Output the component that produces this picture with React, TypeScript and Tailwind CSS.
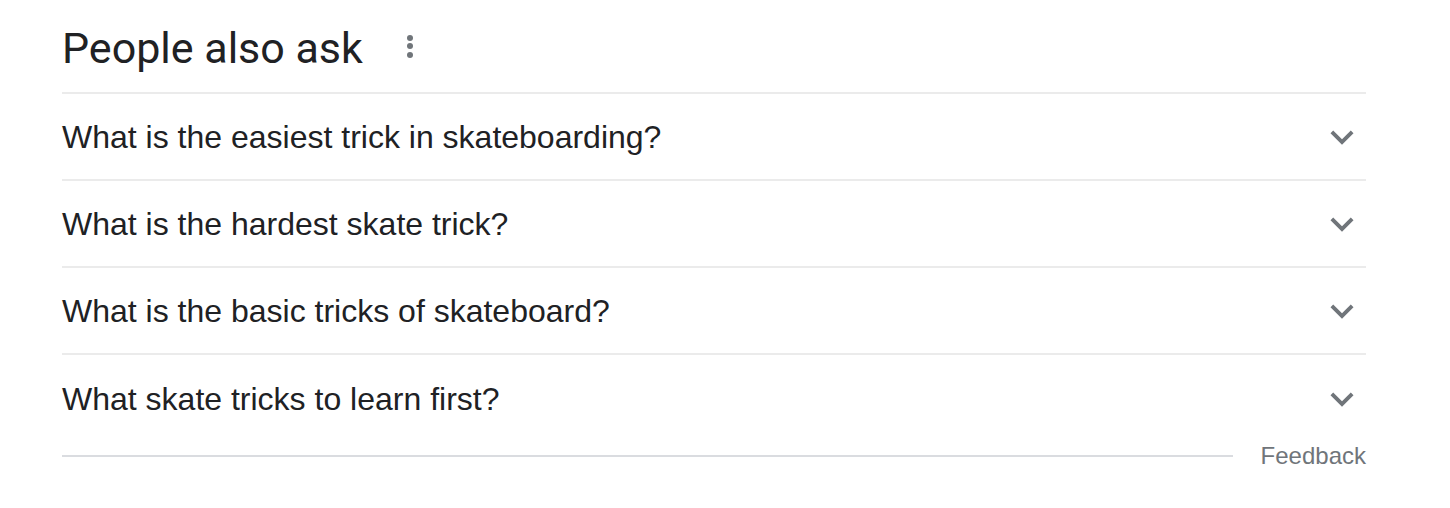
import React from "react";

const questions = [
  "What is the easiest trick in skateboarding?",
  "What is the hardest skate trick?",
  "What is the basic tricks of skateboard?",
  "What skate tricks to learn first?",
];

function Chevron() {
  return (
    <svg width="46" height="46" viewBox="0 0 24 24" className="shrink-0 mr-[1px]">
      <path d="M7.41 8.59 12 13.17l4.59-4.58L18 10l-6 6-6-6 1.41-1.41z" fill="#70757a" />
    </svg>
  );
}

export default function App() {
  return (
    <div className="w-[1450px] h-[508px] bg-white pl-[62px] pr-[84px]" style={{ fontFamily: "'Liberation Sans', Arial, sans-serif" }}>
      <div className="h-[94px] flex items-center pt-[4px] border-b-2 border-[#ebebeb]">
        <h2 className="text-[43px] leading-none text-[#202124]" style={{ fontFamily: "Roboto, 'Liberation Sans', sans-serif" }}>
          People also ask
        </h2>
        <div className="ml-[44px] flex flex-col gap-[2.5px] -mt-[4px]">
          <span className="block w-[6px] h-[6px] rounded-full bg-[#70757a]" />
          <span className="block w-[6px] h-[6px] rounded-full bg-[#70757a]" />
          <span className="block w-[6px] h-[6px] rounded-full bg-[#70757a]" />
        </div>
      </div>
      {questions.map((q, i) => (
        <div
          key={q}
          className={`h-[87px] flex items-center justify-between ${i < questions.length - 1 ? "border-b-2 border-[#ebebeb]" : ""}`}
        >
          <span className="text-[32px] leading-none text-[#202124]">{q}</span>
          <Chevron />
        </div>
      ))}
      <div className="flex items-center h-[28px]">
        <div className="flex-1 h-[2px] bg-[#dadce0]" />
        <span className="ml-[28px] text-[24px] leading-none text-[#70757a]">Feedback</span>
      </div>
    </div>
  );
}
